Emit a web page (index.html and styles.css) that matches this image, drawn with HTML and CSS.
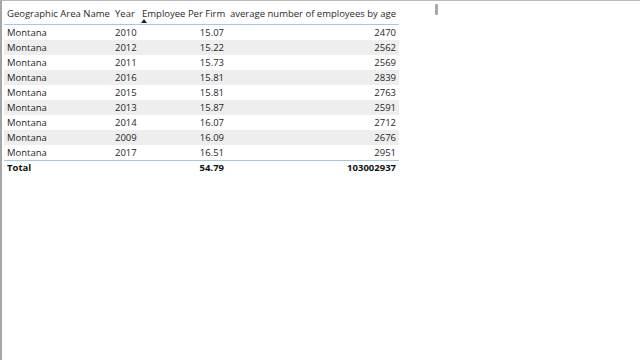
FILE: index.html
```html
<!DOCTYPE html>
<html>
<head>
<meta charset="utf-8">
<link rel="stylesheet" href="styles.css">
</head>
<body>
<div class="canvas">
  <div class="visual">
    <table class="grid">
      <colgroup>
        <col class="w1"><col class="w2"><col class="w3"><col class="w4">
      </colgroup>
      <thead>
        <tr>
          <th>Geographic Area Name</th>
          <th>Year</th>
          <th class="sorted">Employee Per Firm<span class="sort-arrow"></span></th>
          <th>average number of employees by age</th>
        </tr>
      </thead>
      <tbody>
        <tr><td>Montana</td><td class="num">2010</td><td class="num">15.07</td><td class="num">2470</td></tr>
        <tr class="alt"><td>Montana</td><td class="num">2012</td><td class="num">15.22</td><td class="num">2562</td></tr>
        <tr><td>Montana</td><td class="num">2011</td><td class="num">15.73</td><td class="num">2569</td></tr>
        <tr class="alt"><td>Montana</td><td class="num">2016</td><td class="num">15.81</td><td class="num">2839</td></tr>
        <tr><td>Montana</td><td class="num">2015</td><td class="num">15.81</td><td class="num">2763</td></tr>
        <tr class="alt"><td>Montana</td><td class="num">2013</td><td class="num">15.87</td><td class="num">2591</td></tr>
        <tr><td>Montana</td><td class="num">2014</td><td class="num">16.07</td><td class="num">2712</td></tr>
        <tr class="alt"><td>Montana</td><td class="num">2009</td><td class="num">16.09</td><td class="num">2676</td></tr>
        <tr><td>Montana</td><td class="num">2017</td><td class="num">16.51</td><td class="num">2951</td></tr>
      </tbody>
      <tfoot>
        <tr><td>Total</td><td></td><td class="num">54.79</td><td class="num">103002937</td></tr>
      </tfoot>
    </table>
    <div class="scroll-thumb"></div>
  </div>
</div>
</body>
</html>
```
FILE: styles.css
```css
html, body {
  margin: 0;
  padding: 0;
  background: #ffffff;
}
.canvas {
  width: 640px;
  height: 360px;
  box-sizing: border-box;
  border-top: 1px solid #b8b8b8;
  border-left: 2px solid #a6a6a6;
  position: relative;
  overflow: hidden;
}
.visual {
  padding: 2px 0 0 2px;
}
.grid {
  border-collapse: collapse;
  table-layout: fixed;
  width: 395px;
  font-family: "Open Sans", "Noto Sans", sans-serif;
  font-size: 9.5px;
  color: #1f1f1f;
  white-space: nowrap;
}
.w1 { width: 108px; }
.w2 { width: 27px; }
.w3 { width: 88px; }
.w4 { width: 172px; }
.grid th {
  font-weight: normal;
  color: #2b2b2b;
  text-align: left;
  height: 21px;
  padding: 0 3px;
  border-bottom: 1px solid #9fc9e8;
  vertical-align: middle;
  position: relative;
  overflow: visible;
}
.grid td {
  height: 15px;
  padding: 0 3px;
  line-height: 15px;
}
.grid td.num { text-align: right; }
.grid tr.alt td { background: #eeeeee; }
.grid tfoot td {
  font-weight: bold;
  color: #111111;
  border-top: 1px solid #9fc9e8;
  height: 13px;
  line-height: 13px;
}
.sort-arrow {
  position: absolute;
  left: 2px;
  bottom: 1px;
  width: 0;
  height: 0;
  border-left: 3px solid transparent;
  border-right: 3px solid transparent;
  border-bottom: 4px solid #222222;
}
.scroll-thumb {
  position: absolute;
  left: 433px;
  top: 3px;
  width: 3px;
  height: 11px;
  background: #a9a9a9;
  border-radius: 1px;
}
```
